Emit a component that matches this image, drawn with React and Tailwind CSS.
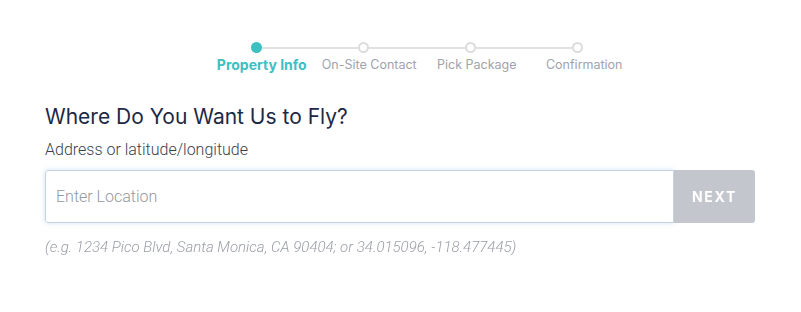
import { useState } from 'react'

const STEPS = ['Property Info', 'On-Site Contact', 'Pick Package', 'Confirmation']

export default function App() {
  const [location, setLocation] = useState('')
  const active = 0

  return (
    <div className="w-[801px] h-[312px] bg-white font-['Roboto',sans-serif]">
      {/* Stepper */}
      <div className="pt-[42px] pl-[208px]">
        <div className="flex items-center w-[332px] ml-[43px]">
          {STEPS.map((s, i) => (
            <div key={s} className={`flex items-center ${i < STEPS.length - 1 ? 'flex-1' : ''}`}>
              <span
                className={`w-[11px] h-[11px] rounded-full shrink-0 ${
                  i === active ? 'bg-[#3cc0c2]' : 'bg-white border-2 border-[#dcdcdf]'
                }`}
              />
              {i < STEPS.length - 1 && <span className="flex-1 h-[2px] bg-[#e1e1e3]" />}
            </div>
          ))}
        </div>
        <div className="grid grid-cols-4 items-center w-[430px] mt-[3px] font-['Inter',sans-serif] text-[12.5px] leading-[18px]">
          {STEPS.map((s, i) => (
            <span
              key={s}
              className={`text-center ${i === active ? 'text-[#3cc0c2] font-bold text-[14px]' : 'text-[#9ea3ad]'}`}
            >
              {s}
            </span>
          ))}
        </div>
      </div>

      {/* Form */}
      <div className="px-[45px] pt-[29px]">
        <h1 className="font-['Inter',sans-serif] text-[21px] leading-[28px] text-[#1c2946]">
          Where Do You Want Us to Fly?
        </h1>
        <p className="mt-[9px] font-light text-[16px] leading-[20px] text-[#3a414e]">Address or latitude/longitude</p>

        <div className="flex mt-[10px] w-[710px] h-[53px]">
          <input
            autoFocus
            value={location}
            onChange={e => setLocation(e.target.value)}
            placeholder="Enter Location"
            className="flex-1 px-[10px] font-light text-[16px] text-[#333] placeholder:text-[#9299a2] border border-[#c6d2de] rounded-l-[3px] shadow-[0_0_5px_rgba(120,170,230,0.35)] outline-none caret-black"
          />
          <button className="w-[81px] bg-[#c3c7cd] rounded-r-[3px] text-white font-bold text-[14px] tracking-[0.12em] font-['Inter',sans-serif]">
            NEXT
          </button>
        </div>

        <p className="mt-[15px] font-light italic text-[15px] leading-[18px] text-[#9a9ea6]">
          (e.g. 1234 Pico Blvd, Santa Monica, CA 90404; or 34.015096, -118.477445)
        </p>
      </div>
    </div>
  )
}
